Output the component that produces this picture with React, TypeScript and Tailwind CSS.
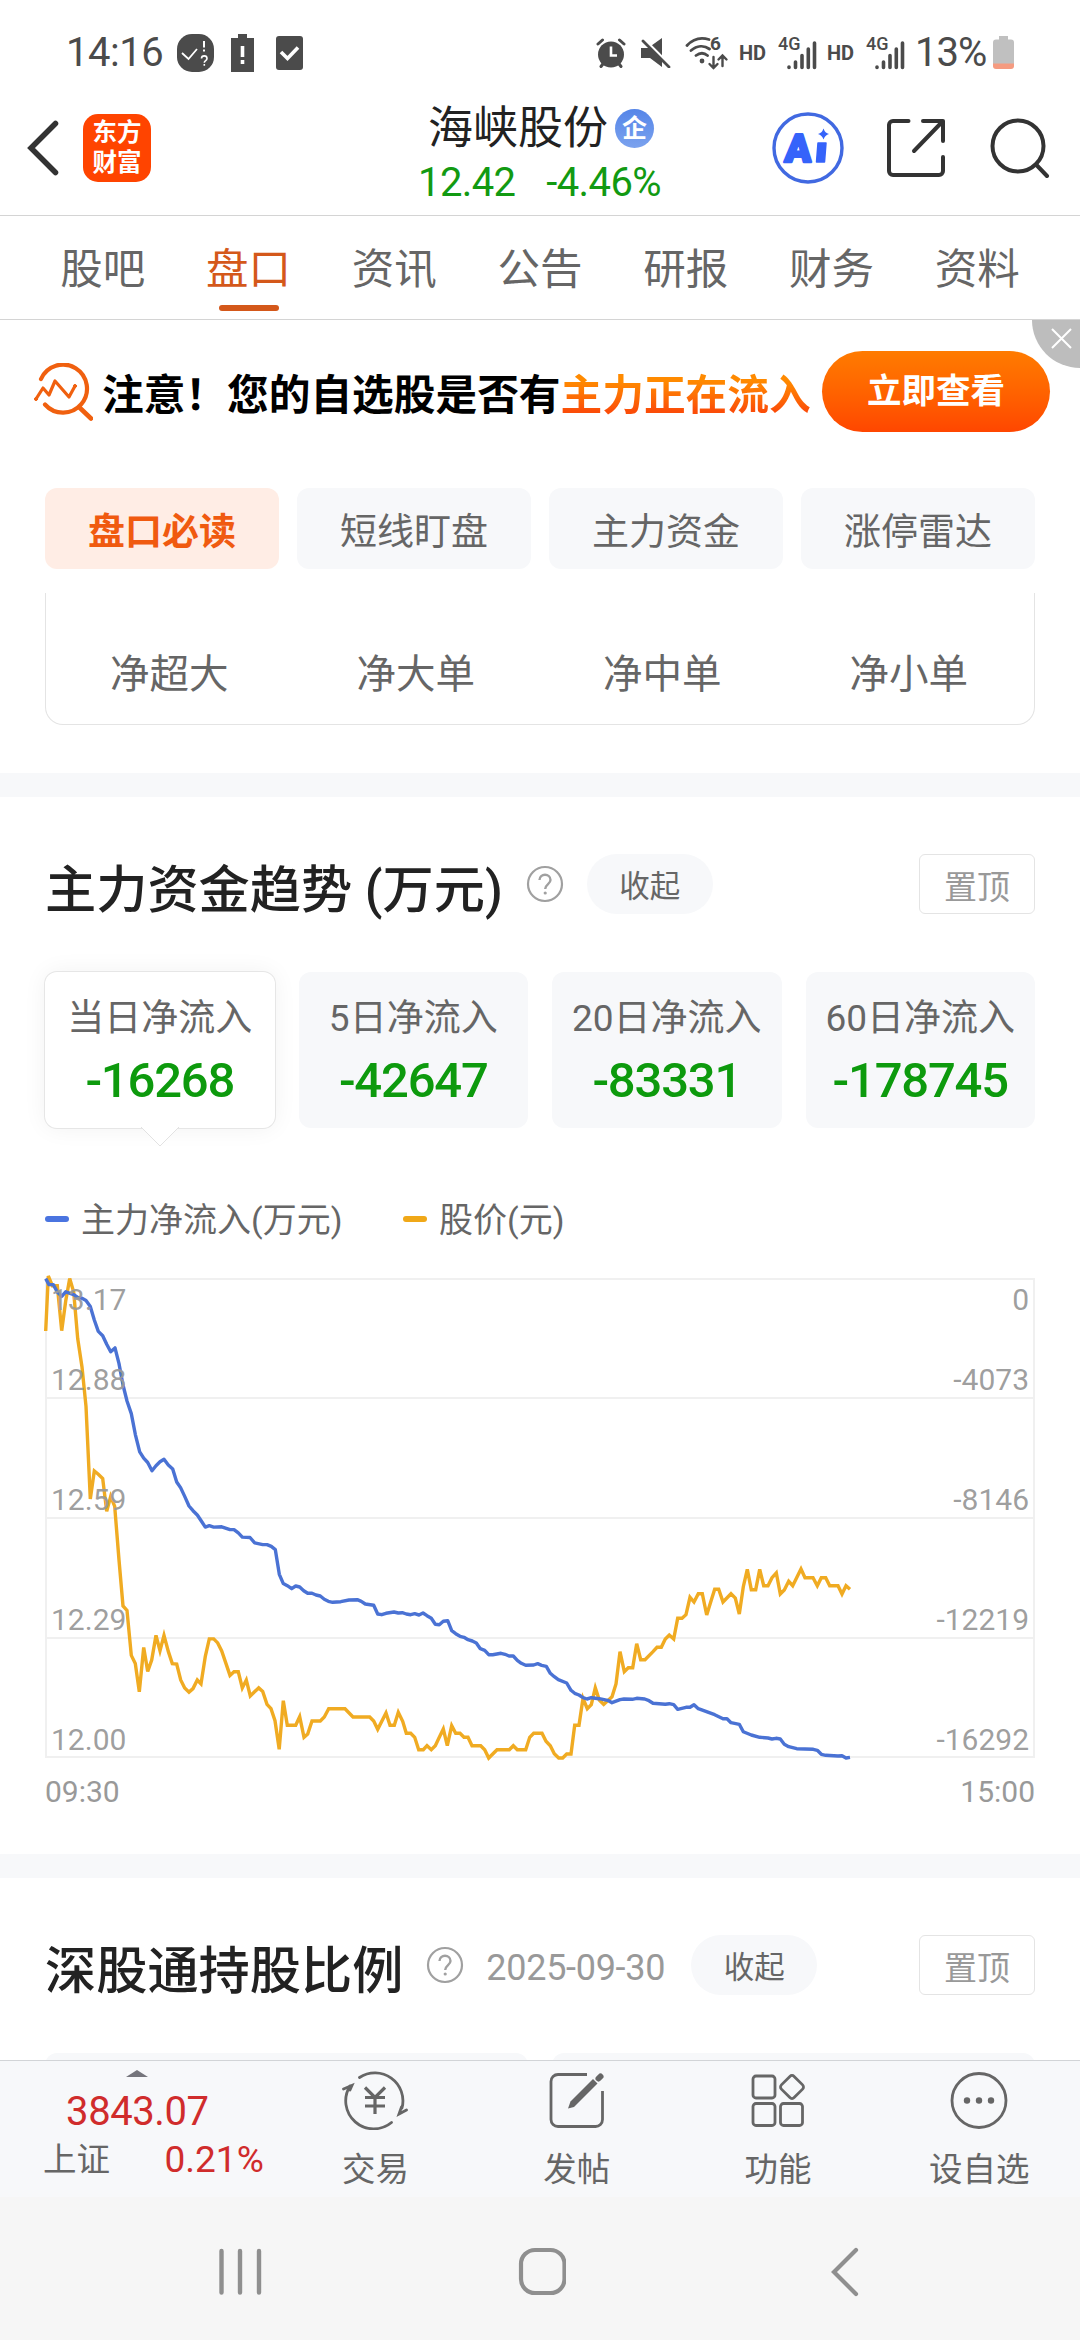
import type { ReactNode } from "react";
import clsx from "clsx";

const tabs = ["股吧", "盘口", "资讯", "公告", "研报", "财务", "资料"];
const chips = ["盘口必读", "短线盯盘", "主力资金", "涨停雷达"];
const orders = ["净超大", "净大单", "净中单", "净小单"];

const flows = [
  { label: "当日净流入", value: "-16268" },
  { label: "5日净流入", value: "-42647" },
  { label: "20日净流入", value: "-83331" },
  { label: "60日净流入", value: "-178745" },
];

const priceTicks = ["13.17", "12.88", "12.59", "12.29", "12.00"];
const flowTicks = ["0", "-4073", "-8146", "-12219", "-16292"];
const gridLines = [1, 120, 240, 360, 479];
const tickBaselines = [32, 112, 232, 352, 472];

const pricePoints =
  "0.7,53 3.3,-2 7.3,7.7 12.3,7.7 16.7,52.7 20.7,23 24.7,0.6 28.7,14 32.7,60.6 37,89 41,128.4 45.3,221 49.3,193 53.3,196.3 57.7,200.6 61.7,233.4 65.7,218.4 69.7,228.4 74,282 78,328 82,332.4 86.3,377.4 90.3,385.6 94.3,413.8 98.7,369.5 102.7,393.4 106.7,382 111,357.4 115,372.7 119,357.4 123.3,373.4 127.3,385.6 131.7,386 135.7,402 139.7,409.9 144,414.1 148,410.6 152.3,402 156,405.9 160.3,378.4 164.3,360.9 168.7,360.9 172.7,364.9 176.7,373 181,385.6 185,397.4 189,393.8 193.3,393.8 197.3,409.9 201.3,402 205.3,418 209.3,414 213.7,409.9 217.7,413.4 222,426.3 226,430.6 230,442.7 234.2,471.3 238.3,422.7 242.3,447.3 250.7,447.3 254.7,438.7 259,459.3 262.7,456 267,443 275.3,443 279.3,439 283.7,430.7 300,430.7 308,439 324.7,439 328.7,443 332.7,451.3 341,435 345,447.3 349.3,447.3 353.3,434.3 357.7,443.3 361.3,455.3 365.7,455.3 369.7,459.3 373.7,471.7 378.3,471.7 382,467.7 386.3,471.7 390.3,467.7 394.3,459.3 398.3,451 402.3,467.7 406.7,447.7 410.7,455.3 415,455.3 419,459.3 423,459.3 427,467.7 435.7,467.7 439.7,471.7 443.7,480 452,471.7 464.3,471.7 468.3,467.7 472.3,471.7 480.7,471.7 484.7,459.3 488.7,455.3 497,455.3 501,463.3 505.3,467.7 509.3,475.7 513.7,480 517.7,480 521.7,476 526,476 529.7,447.3 534,447.3 538,420.3 542.3,430.7 546.3,426.7 550.3,409.7 554.3,422 558.7,426.3 562.7,422.7 567,418.7 571,406 575,373.7 579.3,393.7 583.3,389.7 587.7,389.7 591.7,365.7 595.7,381.7 600,381.7 608,373.7 612,369.3 616.3,369.3 620.3,361 624.3,357 628.7,361 632.7,340.3 637,340.3 641,336.7 645,319.3 649,324 653.3,315.7 657.3,315.7 661.7,337 665.7,324 669.7,311.3 673.7,311.3 678,324 686,315.7 690.3,320 694.3,336 698.3,308.7 702.3,291.3 706.3,311.7 710.7,311.7 714.7,291.3 718.7,307.7 723,307.7 727,299.7 731.3,295 735.3,316 739.3,312 743.7,303.3 747.7,307.7 756,291 760,299.7 768,299.7 772.3,307.7 776.3,299.7 780.7,299.7 784.7,307.7 793,307.7 797,316 801,307.7 805,311.3";

const flowPoints =
  "0.7,0.6 4,6.6 8.3,6.6 12.3,14 16.7,18.4 20.7,13.8 28.7,16.6 32.7,19.5 37,20.2 41,22.4 45.3,28.4 49.3,42 53.3,53.4 57.7,57.7 61.7,66.3 65.7,73.8 70,69.9 74,85.6 78,107 82,123 86.3,135.6 90.3,156.3 94.7,173.8 98.7,180.2 102.7,184.5 107,192.7 111,187.7 115,183.8 119,181.3 123.3,187 127.7,190.9 131.7,204 135.7,209.9 139.7,218.4 144,228 148,232.7 152.3,237 156.3,243 160.3,249.1 164.3,247.7 168.7,249.1 176.7,248.8 185,251.6 189,251.6 193.3,254.9 197.3,259.1 205,259.5 209.7,264.9 217.7,266.6 222,266.6 226.3,268.4 230.3,271.6 234.3,296.3 238.3,305.6 242.3,307.7 246.7,310.7 250.7,308 254.7,309 258.7,312.7 262.7,315.3 267,315.3 271,317 275.3,318 279.3,321.3 283.3,323.3 287.7,324.3 295.7,323.7 304,322 312.3,321.7 316.3,323.3 320.3,326 328.7,327.3 332.7,336 336.7,336.7 341,335.3 349,334 353.3,335 357.3,334.7 361.3,336 365.7,336.7 369.7,335.7 374,337 378,335 382,337.7 386.3,340.3 390.3,346.3 394.3,346.7 398.3,343.3 402.7,342.7 406.7,352.7 410.7,355.7 415,358.3 419,359.3 423,361.7 427.3,363 431.3,365 435.3,370.7 439.7,372.3 443.7,376.7 447.7,376.7 456,375.3 460,376.3 464,378 468.3,378 472.3,382.3 476.3,385.3 480.7,387.3 488.7,387 492.7,385.7 496.7,387.3 501.3,388.3 505.3,395.3 509.3,398.7 513.3,401.7 521.7,405 526,412.3 529.7,415.3 534,417 538,419.7 542,421 546.3,419.7 554.3,420.7 562.7,422.3 567,424.7 575,421.7 579,421 587.3,421.3 591.7,420.3 599.7,421 604,422.7 608,425.3 620.3,426.3 624.3,425.7 628.7,426.7 632.7,431.3 641,429.3 645,429.3 649,426.7 653.3,430.7 669.7,436.7 678,440.7 682,440.7 686,444.7 694.3,446.3 698.3,453.7 706.3,457 714.7,459.3 723,460 727,461 731,460.3 735.3,461 739.3,466.3 743.7,468.7 751.7,470.7 768.3,471.3 772.3,472.3 776.3,476.3 780.7,477.3 793,478 797,477.7 801,480 805,479.3";

function Signal() {
  return (
    <div className="relative h-[34px] w-[38px]">
      <span className="absolute top-0 left-0 text-[18px] leading-[16px] font-medium">4G</span>
      <svg className="absolute top-1 left-[9px]" width="30" height="30" viewBox="0 0 30 30" fill="none" stroke="#4b4b4b" strokeWidth="3.6" strokeLinecap="round">
        <path d="M2 27v.5M8.500 22v5.500M15 15.500v12M21.300 9v18.500M27.500 3v24.500" />
      </svg>
    </div>
  );
}

function StatusBar() {
  return (
    <div className="flex h-[96px] items-center pt-[9px] pl-[66px] text-[#4b4b4b]">
      <span className="w-[111px] text-[40px] leading-none tracking-[-0.5px]">14:16</span>
      <svg className="mr-[17px]" width="37" height="38" viewBox="0 0 37 38">
        <rect width="37" height="38" rx="15" fill="#4b4b4b" />
        <path d="M5 19l6.500 6L20 15" fill="none" stroke="#fff" strokeWidth="1.800" />
        <path d="M27 7v6.500M27 15.500v2" stroke="#fff" strokeWidth="2" />
        <path d="M24.500 24.500c0-3.500 5.500-3.500 5.500 0 0 2.200-2.700 2-2.700 4.300M27.300 30v1.800" fill="none" stroke="#fff" strokeWidth="1.600" />
      </svg>
      <svg className="mr-[22px]" width="23" height="38" viewBox="0 0 23 38">
        <path d="M7 0h9v4h7v34H0V4h7z" fill="#4b4b4b" />
        <path d="M11.500 12v11M11.500 26v4" stroke="#fff" strokeWidth="3.600" />
      </svg>
      <svg width="27" height="34" viewBox="0 0 27 34">
        <rect width="27" height="34" rx="3" fill="#4b4b4b" />
        <path d="M5 16l6.500 6.500L22 11.500" fill="none" stroke="#fff" strokeWidth="3.600" />
      </svg>
      <svg className="ml-[293px]" width="30" height="30" viewBox="0 0 30 30" fill="none">
        <circle cx="15" cy="16.500" r="13" fill="#4b4b4b" />
        <path d="M2 6l4.500-4M28 6l-4.500-4M5 28.500l3-4M25 28.500l-3-4" stroke="#4b4b4b" strokeWidth="3" strokeLinecap="round" />
        <path d="M15 8.500v9h6" stroke="#fff" strokeWidth="2.600" />
      </svg>
      <svg className="ml-[14px]" width="31" height="31" viewBox="0 0 31 31">
        <path d="M1 11h7L22 1v29l-12-9H1z" fill="#4b4b4b" />
        <path d="M1 0l30 30" stroke="#fff" strokeWidth="4" />
        <path d="M3 4l26 26" stroke="#4b4b4b" strokeWidth="2.800" strokeLinecap="round" />
      </svg>
      <div className="relative ml-[14px] h-[34px] w-[44px]">
        <svg width="44" height="34" viewBox="0 0 44 34" fill="none" stroke="#4b4b4b" strokeWidth="2.800" strokeLinecap="round">
          <path d="M2 9.500C8 3 16 1 24 3.500M6 14.500c6-5 13-5.500 18.500-1.500M11 19.500c4-3 8-3 11.500 0" />
          <circle cx="17" cy="25" r="1" fill="#4b4b4b" />
          <path d="M28.500 21v11m-4-4l4 4 4-4M37.500 30V19.500m-4 4l4-4 4 4" strokeWidth="2.400" />
        </svg>
        <span className="absolute top-0 left-[25px] text-[19px] leading-[16px] font-bold">6</span>
      </div>
      <span className="ml-[10px] w-[39px] text-[20px] leading-none font-bold tracking-[-0.2px]">HD</span>
      <Signal />
      <span className="ml-[11px] w-[39px] text-[20px] leading-none font-bold tracking-[-0.2px]">HD</span>
      <Signal />
      <span className="ml-[11px] w-[78px] text-[40px] leading-none whitespace-nowrap tracking-[-1px]">13%</span>
      <svg width="21" height="33" viewBox="0 0 21 33">
        <path d="M6 0h9v3.500h3a3 3 0 013 3V28H0V6.500a3 3 0 013-3h3z" fill="#c0c0c0" />
        <path d="M0 27.500h21V30a3 3 0 01-3 3H3a3 3 0 01-3-3z" fill="#f59b80" />
      </svg>
    </div>
  );
}

function Header() {
  return (
    <header className="flex h-[120px] items-center border-b border-[#d4d4d4] pb-[15px]">
      <svg className="ml-[27px]" width="32" height="56" viewBox="0 0 32 56" fill="none" stroke="#333" strokeWidth="5.500" strokeLinecap="round">
        <path d="M28.500 3.500L4 28l24.500 24.500" />
      </svg>
      <div className="ml-6 grid size-[68px] place-content-center rounded-[15px] bg-[#ff4400] text-center text-[24.500px] leading-[30px] font-bold text-white">
        <span>东方</span>
        <span>财富</span>
      </div>
      <div className="mt-[14px] ml-[267px] flex w-[243px] flex-col gap-[3px]">
        <div className="flex items-center gap-[7px] pl-[10px]">
          <span className="text-[45px] leading-[52px] text-[#222]">海峡股份</span>
          <span className="grid size-[39px] place-content-center rounded-full bg-linear-to-b from-[#5585e8] to-[#7ba2ee] text-[25px] leading-none font-bold text-white">企</span>
        </div>
        <div className="flex justify-between text-[40px] leading-[50px] tracking-[-0.6px] text-[#129a12]">
          <span>12.42</span>
          <span>-4.46%</span>
        </div>
      </div>
      <svg className="ml-[111px]" width="72" height="72" viewBox="0 0 72 72">
        <circle cx="36" cy="36" r="34" fill="none" stroke="#4169e1" strokeWidth="3.400" />
        <text x="13" y="50" fill="#3563fa" stroke="#3563fa" strokeWidth="2.500" strokeLinejoin="round" fontSize="39" fontWeight="900" fontFamily="Roboto" transform="skewX(-3) translate(2 0)">A</text>
        <path d="M46 31h8l-1.500 19h-8z" fill="#3563fa" stroke="#3563fa" strokeWidth="1.500" strokeLinejoin="round" />
        <path d="M51.500 16.500q1.500 4.500 5.500 5.500-4 1-5.500 5.500-1.500-4.500-5.500-5.500 4-1 5.500-5.500z" fill="#3563fa" />
      </svg>
      <svg className="ml-[42px]" width="60" height="60" viewBox="0 0 60 60" fill="none" stroke="#333" strokeWidth="4" strokeLinecap="round">
        <path d="M22.500 3H7a4 4 0 00-4 4v46a4 4 0 004 4h46a4 4 0 004-4V39M37 3h20v20M57 3L28 33" strokeLinejoin="round" />
      </svg>
      <svg className="ml-11" width="60" height="60" viewBox="0 0 60 60" fill="none" stroke="#333" strokeWidth="4" strokeLinecap="round">
        <circle cx="28" cy="28" r="25.500" />
        <path d="M46.500 47L57 58" />
      </svg>
    </header>
  );
}

function Banner() {
  return (
    <div className="relative flex h-[168px] items-start pt-[31px]">
      <svg className="mt-3 ml-[33px]" width="60" height="58" viewBox="0 0 60 58" fill="none" stroke="#f0600f" strokeLinecap="round">
        <path d="M8 16a24 24 0 1 1 4 25.500" strokeWidth="4.200" />
        <path d="M47 45l11 10.500" strokeWidth="4.600" />
        <path d="M3 36l7-11 6 7 6-14 14 16 6-11" strokeWidth="3.200" strokeLinejoin="round" />
        <circle cx="3" cy="36" r="1.500" fill="#f0600f" />
        <circle cx="42" cy="23" r="1.500" fill="#f0600f" />
      </svg>
      <p className="ml-[9px] flex h-[90px] items-center text-[41.700px] leading-[50px] font-bold whitespace-nowrap text-black">
        注意！您的自选股是否有
        <span className="bg-linear-to-b from-[#ff8a00] from-20% to-[#fb4d08] to-80% bg-clip-text text-transparent">主力正在流入</span>
      </p>
      <button className="absolute top-[31px] left-[822px] h-[81px] w-[228px] rounded-full bg-linear-to-b from-[#ff7b00] to-[#ff4600] text-[34.500px] leading-none font-bold text-white">
        立即查看
      </button>
      <div className="absolute top-0 right-0 size-12 rounded-bl-full bg-[#bdbdbd]">
        <svg className="absolute top-2 left-[19px]" width="21" height="21" viewBox="0 0 21 21" stroke="#fff" strokeWidth="2">
          <path d="M1 1l19 19M20 1L1 20" />
        </svg>
      </div>
    </div>
  );
}

function SectionHead({ title, date }: { title: string; date?: string }) {
  return (
    <div className="flex h-[60px] items-center pr-[45px] pl-[45px]">
      <h2 className="pt-[13px] text-[51.200px] leading-[60px] font-medium whitespace-nowrap text-[#222]">{title}</h2>
      <svg className="ml-[23px] shrink-0" width="38" height="38" viewBox="0 0 38 38" fill="none" stroke="#a0a0a0">
        <circle cx="19" cy="19" r="17" strokeWidth="2.200" />
        <path d="M13.500 15c0-7 11-7 11 0 0 4-5.300 4.200-5.300 9" strokeWidth="2.400" />
        <circle cx="19.200" cy="28" r="1.600" fill="#a0a0a0" stroke="none" />
      </svg>
      {date && <span className="ml-[22px] w-[182px] pt-[5px] text-[36px] leading-none tracking-[-0.3px] whitespace-nowrap text-[#999]">{date}</span>}
      <button className="ml-[23px] h-[60px] w-[126px] rounded-full bg-[#f7f8fa] pt-1.5 text-[30.500px] leading-none text-[#666]">收起</button>
      <button className="ml-auto h-[60px] w-[116px] rounded-md border border-[#e4e4e4] pt-1.5 text-[33px] leading-none text-[#999]">置顶</button>
    </div>
  );
}

function TrendChart() {
  return (
    <svg className="ml-[45px] block overflow-visible" width="990" height="576" viewBox="0 0 990 576" fontFamily="Roboto" fontSize="30" fill="#999">
      <g stroke="#f0f0f0" strokeWidth="2">
        {gridLines.map((y) => (
          <line key={y} x1="0" x2="990" y1={y} y2={y} />
        ))}
        <line x1="1" x2="1" y1="0" y2="480" />
        <line x1="989" x2="989" y1="0" y2="480" />
      </g>
      <polyline points={pricePoints} fill="none" stroke="#f0ab22" strokeWidth="3.400" strokeLinejoin="miter" />
      <polyline points={flowPoints} fill="none" stroke="#4a72d4" strokeWidth="3.400" strokeLinejoin="round" />
      <g fillOpacity="0.95">
        {priceTicks.map((t, i) => (
          <text key={t} x="6" y={tickBaselines[i]}>{t}</text>
        ))}
        {flowTicks.map((t, i) => (
          <text key={t} x="984" y={tickBaselines[i]} textAnchor="end">{t}</text>
        ))}
      </g>
      <text x="0" y="524">09:30</text>
      <text x="990" y="524" textAnchor="end">15:00</text>
    </svg>
  );
}

function BarItem({ label, children }: { label: string; children: ReactNode }) {
  return (
    <div className="flex w-[201.500px] flex-col items-center">
      <svg className="mt-[9px]" width="66" height="60" viewBox="0 0 66 60" fill="none" stroke="#666" strokeWidth="2.800" strokeLinecap="round">
        {children}
      </svg>
      <span className="mt-[18px] text-[33.500px] leading-[44px] text-[#666]">{label}</span>
    </div>
  );
}

function BottomBar() {
  return (
    <div className="flex h-[137px] border-t border-[#d2d4d7] bg-[#f7f8fa]">
      <div className="flex w-[275px] flex-col items-center">
        <svg className="mt-[9px]" width="22" height="7" viewBox="0 0 22 7">
          <path d="M0 7L11 0l11 7z" fill="#75757c" />
        </svg>
        <span className="mt-[11px] text-[40px] leading-[47px] tracking-[-0.4px] text-[#d02c2c]">3843.07</span>
        <div className="flex w-full items-center justify-between pr-[11px] pl-[43px] leading-[50px]">
          <span className="text-[33.500px] text-[#666]">上证</span>
          <span className="text-[37px] text-[#d02c2c]">0.21%</span>
        </div>
      </div>
      <BarItem label="交易">
        <path d="M17.500 7.500A28 28 0 0 1 60 38M49.500 52.500A28 28 0 0 1 8 16" />
        <path d="M1.500 19L10 15.500 8 20M64.500 40L57 44l2.500-7" />
        <path d="M23 17.500l10 10 10-10M33 27.500V44M23 27.500h20M23 36h20" strokeWidth="3.200" strokeLinecap="butt" />
      </BarItem>
      <BarItem label="发帖">
        <path d="M43 4.500H14a7 7 0 00-7 7v38a7 7 0 007 7h37.500a7 7 0 007-7V21" strokeLinecap="butt" />
        <path d="M24 38.500l2.500-7L49 9l4.500 4.500L30 37z" fill="#666" stroke="none" />
        <path d="M54.500 8.500l2-2" strokeWidth="6" />
      </BarItem>
      <BarItem label="功能">
        <rect x="8" y="6" width="22" height="22" rx="3" />
        <rect x="8" y="33.500" width="22" height="22" rx="3" />
        <rect x="35.500" y="33.500" width="22" height="22" rx="3" />
        <rect x="38" y="8" width="18" height="18" rx="3" transform="rotate(45 47 17)" />
      </BarItem>
      <BarItem label="设自选">
        <circle cx="33" cy="30.500" r="27" />
        <g fill="#666" stroke="none">
          <circle cx="21" cy="30.500" r="3.200" />
          <circle cx="33" cy="30.500" r="3.200" />
          <circle cx="45" cy="30.500" r="3.200" />
        </g>
      </BarItem>
    </div>
  );
}

function SystemNav() {
  return (
    <div className="flex h-[143px] items-start bg-[#f6f6f6] pt-[50px]">
      <svg className="ml-[219px]" width="43" height="50" viewBox="0 0 43 50" stroke="#8f8f8f" strokeWidth="4.400" strokeLinecap="round">
        <path d="M2.500 4v41.500M21 4v41.500M40 4v41.500" />
      </svg>
      <svg className="ml-[256px]" width="48" height="50" viewBox="0 0 48 50" fill="none" stroke="#8f8f8f" strokeWidth="4.200">
        <rect x="3" y="3" width="43.500" height="43" rx="14" />
      </svg>
      <svg className="ml-[265px]" width="29" height="50" viewBox="0 0 29 50" fill="none" stroke="#8f8f8f" strokeWidth="4.200" strokeLinecap="round">
        <path d="M25 3L3 25l22 22" />
      </svg>
    </div>
  );
}

export default function App() {
  return (
    <div className="flex h-[2340px] w-[1080px] flex-col overflow-hidden bg-white font-['Roboto','Noto_Sans_CJK_SC',sans-serif]">
      <StatusBar />
      <Header />
      <nav className="flex h-[104px] border-b border-[#d4d4d4] px-[30px]">
        {tabs.map((tab) => (
          <div key={tab} className={clsx("flex flex-1 flex-col items-center pt-[26px] text-[42.500px] leading-[56px]", tab === "盘口" ? "text-[#d4581a]" : "text-[#666]")}>
            {tab}
            {tab === "盘口" && <span className="mt-[7px] h-[6px] w-[60px] rounded-full bg-[#d4581a]" />}
          </div>
        ))}
      </nav>
      <Banner />

      <div className="grid grid-cols-4 gap-[18px] px-[45px]">
        {chips.map((chip, i) => (
          <div
            key={chip}
            className={clsx(
              "flex h-[81px] items-center justify-center rounded-xl pt-2 text-[37px] leading-none",
              i === 0 ? "bg-[#ffede5] font-bold text-[#f05a10]" : "bg-[#f7f8fa] text-[#666]"
            )}
          >
            {chip}
          </div>
        ))}
      </div>
      <div className="mx-[45px] mt-6 grid h-[132px] grid-cols-4 rounded-b-[18px] border border-t-0 border-[#e4e4e4] pt-[54px] pr-0.5 text-center text-[39.500px] leading-[56px] text-[#666]">
        {orders.map((o) => (
          <span key={o}>{o}</span>
        ))}
      </div>

      <div className="mt-12 h-6 shrink-0 bg-[#f7f8fa]" />
      <section className="pt-[57px]">
        <SectionHead title="主力资金趋势 (万元)" />
        <div className="mt-[58px] grid grid-cols-4 gap-6 px-[45px]">
          {flows.map((f, i) => (
            <div
              key={f.label}
              className={clsx(
                "relative flex h-[156px] flex-col items-center rounded-xl pt-[22px]",
                i === 0 ? "bg-white shadow-[0_0_24px_rgba(0,0,0,0.06)] ring-1 ring-[#e6e6e6]" : "bg-[#f7f8fa]"
              )}
            >
              <span className="text-[37px] leading-[50px] whitespace-nowrap text-[#666]">{f.label}</span>
              <span className="mt-[7px] text-[49px] leading-[60px] font-medium tracking-[-1.2px] text-[#0d9a0d]">{f.value}</span>
              {i === 0 && (
                <svg className="absolute top-[155px] left-[96px]" width="38" height="20" viewBox="0 0 38 20">
                  <path d="M0 0l19 19L38 0" fill="#fff" stroke="#e2e2e2" />
                </svg>
              )}
            </div>
          ))}
        </div>
        <div className="mt-[63px] flex h-[56px] items-center pl-[45px] text-[34px] leading-none text-[#666]">
          <span className="mr-3 h-[6px] w-6 rounded-full bg-[#4a74e0]" />
          <span className="w-[322px] pt-0.5">主力净流入(万元)</span>
          <span className="mr-3 h-[6px] w-6 rounded-full bg-[#f0a818]" />
          <span className="pt-0.5">股价(元)</span>
        </div>
        <div className="mt-[31px] h-[576px]">
          <TrendChart />
        </div>
      </section>

      <div className="h-6 shrink-0 bg-[#f7f8fa]" />
      <section className="h-[182px] shrink-0 overflow-hidden pt-[57px]">
        <SectionHead title="深股通持股比例" date="2025-09-30" />
        <div className="mt-[58px] grid grid-cols-2 gap-6 px-[45px]">
          <div className="h-16 rounded-xl bg-[#f7f8fa]" />
          <div className="h-16 rounded-xl bg-[#f7f8fa]" />
        </div>
      </section>
      <BottomBar />
      <SystemNav />
    </div>
  );
}
